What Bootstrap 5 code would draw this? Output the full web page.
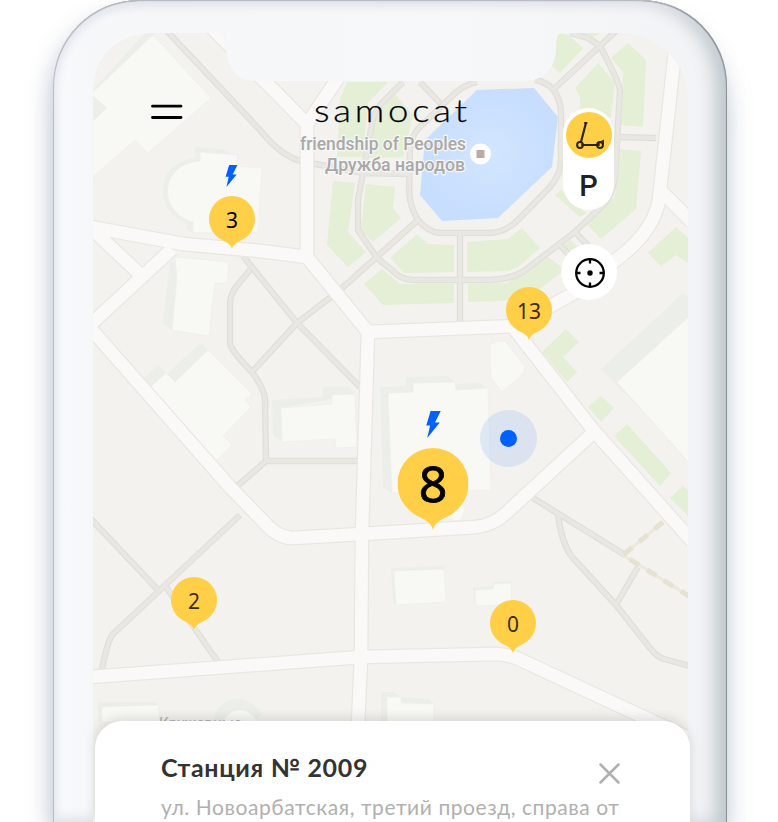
<!DOCTYPE html>
<html lang="ru">
<head>
<meta charset="utf-8">
<meta name="viewport" content="width=device-width, initial-scale=1">
<title>samocat</title>
<link href="https://cdn.jsdelivr.net/npm/bootstrap@5.3.0/dist/css/bootstrap.min.css" rel="stylesheet">
<style>
body{width:778px;height:822px;background:#fff;font-family:Lato,"Noto Sans",sans-serif}
.phone{width:674px;height:822px;margin-left:53px;padding:33px 38px 0 40px;border-radius:86px 86px 0 0;
background:linear-gradient(90deg,#f9fafc,#f6f7f9 6%,#f7f8fa 60%,#f1f3f5);
box-shadow:inset 1px 1px 0 #b9bdc3,inset -1px 1px 1px #858d91,inset 4px 4px 9px #e3e6ee,inset -14px 0 18px -3px #bcc4c9,-5px 12px 24px -3px rgba(120,135,165,.45),6px 30px 30px -10px rgba(120,140,165,.38)}
.screen{width:596px}
.map{width:595px;height:789px;left:0;top:0}
.road{stroke-linejoin:round;fill:none}
.topbar{height:156px;padding:66px 0 0 58px}
.logo{font-size:31px;font-weight:300;letter-spacing:3.2px;color:#000;-webkit-text-stroke:.25px #000;line-height:1;margin-left:131px;margin-top:-4px;transform:scaleX(1.18);transform-origin:0 0}
.switcher{width:51px;height:102px;left:470px;top:75px;border-radius:26px;padding-top:4px}
.mode{width:46px;height:46px;background:#ffcf47}
.park{font:500 29px/1 Roboto,sans-serif;color:#222;padding-top:6px}
.locate{width:56px;height:56px;left:468px;top:211px}
.pin{width:46px;height:53px;transform:translate(-50%,0);font-family:"Noto Sans",sans-serif;font-size:21px;color:#3a2c05;line-height:48px}
.pin svg{left:0;top:0;width:100%;height:100%}
.pin.big{width:71px;height:82px;font-size:50px;line-height:71px;-webkit-text-stroke:.8px #000}
.ink{color:#000}
.p3s{left:139px;top:163px}.p13{left:436px;top:254px}.p8{left:340px;top:415px}.p2s{left:101px;top:544px}.p0s{left:420px;top:567px}
.b1{left:132px;top:132px;width:13px;height:22px}.b2{left:333px;top:378px;width:15px;height:27px}
.here{width:57px;height:57px;left:387px;top:377px;background:rgba(0,97,255,.1)}
.here i{width:17px;height:17px;background:#0061ff}
.sheet{width:595px;height:101px;left:2px;top:688px;border-radius:27px 27px 0 0;padding:32px 70px 0 66px;box-shadow:0 -3px 12px rgba(0,0,0,.12)}
.sheet h1{font-size:25px;font-weight:700;color:#333;line-height:29px;letter-spacing:.65px}
.sheet p{font-size:21px;line-height:28px;color:#b0b0b0;margin-top:9px;letter-spacing:.57px}
.shut{width:21px;height:21px;margin-top:10px}
</style>
<script src="https://cdn.jsdelivr.net/npm/bootstrap@5.3.0/dist/js/bootstrap.bundle.min.js"></script>
</head>
<body class="overflow-hidden">
<main class="phone">
<div class="screen position-relative">
<svg class="map position-absolute" viewBox="93 33 595 789">
<defs>
<clipPath id="glass"><path d="M93 822V92C94 56 116 33 156 33H218C227 33 224 41 226 51C229 70 238 81 256 81H526C543 80 554 70 556 52C557 42 555 33 563 33H622C660 34 686 62 688 98V822Z"/></clipPath>
<radialGradient id="water"><stop offset="0" stop-color="#d3e5ff"/><stop offset="1" stop-color="#c7defe"/></radialGradient>
<g id="streets">
<path d="M86 226L183 244L260 251L307 257L368 332L515 326L576 292L621 256Q659 226 660 190L677 33"/>
<path d="M93 230L146 280M172 249L90 325M90 328L230 487L263 521Q276 537 292 538L362 534L476 527Q493 525 505 514L594 432M512 326L594 431L692 541"/>
<path d="M307 258V120M212 28L307 124L338 78M368 332L366 400L362 530L361 657L358 725M90 677L361 657L495 654Q512 655 523 661L695 741M660 190L692 222"/>
</g>
<g id="paths">
<path d="M166 30L260 130Q280 155 300 161L363 173L409 174M403 82L380 105Q373 113 371 130L358 200V230L377 258L393 271Q400 279 412 280H490Q512 279 524 271L575 232L603 205Q616 193 616 160L620 90Q619 82 600 46L588 38L570 33"/>
<path d="M477 82Q466 84 455 93L417 130Q410 140 410 150L409 190Q410 208 418 220Q428 232 440 233L490 233Q506 232 518 220L549 188Q561 175 561 160V112Q559 84 535 80M420 82L440 103M553 90L616 31M618 137L656 138M575 232L595 253M560 245L569 255"/>
<path d="M418 220L340 290L297 323L252 372M460 235V322M243 256L297 323L360 387M250 270L236 287Q230 295 230 305V343Q231 351 252 372Q265 390 265 400L266 461H357M266 461L235 488M240 515L112 635Q106 646 102 670M90 518L158 590M166 587L218 662"/>
<path d="M533 498L625 555M558 515Q562 545 573 558L616 605L650 648Q657 657 664 659L690 666M638 567L616 605"/>
</g>
</defs>
<g clip-path="url(#glass)">
<rect x="93" y="33" width="595" height="789" fill="#f3f2ee"/>
<g fill="#eceee9">
<path d="M93 90L145 33H156L93 94ZM93 96L107 108L93 121Z"/><path d="M195 147L222 149L233 155L193 166C170 176 164 205 193 222V233L187 230V224C153 209 154 163 195 158Z"/>
<path d="M170 262L163 323L172 330L180 262ZM200 343L208 350L175 382L167 374ZM158 365L166 373L145 392L137 385Z"/>
<path d="M272 400L323 397V387L348 386L356 395L281 408L282 442L273 435ZM380 387L406 386V377L448 376L456 384L480 383L488 389L388 394L392 493L383 487ZM683 293L688 297V317L617 382L692 467V462L601 369Z"/>
<path d="M391 568L444 566V570L394 572L396 605L393 603ZM473 588L493 586V582L511 581V585L475 591V606ZM381 692H394L401 697L430 699L434 705L387 701V722H381ZM98 702H155L160 707L102 708V722H98ZM213 722C217 695 248 690 262 715L250 722Z"/>
</g>
<g fill="#f8f8f4" stroke="#efeeea" stroke-width=".7">
<path d="M153 35L211 98L148 153L135 140L93 177V121L107 108L93 96V92Z"/><path d="M200 152L238 155L237 166L262 168L258 232L193 233V222C158 213 158 164 200 161Z"/>
<path d="M175 257L229 262L227 283H215L209 336L172 330L177 278ZM208 350L252 394L245 400L251 407L223 436L232 445L212 465L145 392L166 373L175 382Z"/>
<path d="M281 408L332 404V395L355 394L357 447L336 448L335 439L282 442ZM388 393L413 392V383L455 382L456 390L488 388L491 490L392 493ZM490 345L498 341H505L525 367L524 373L502 392L491 378ZM692 314L617 382L692 466Z"/>
<path d="M394 571L444 569L446 602L396 605ZM475 590L493 589L494 584L511 583V604L476 606ZM387 697H401V703L434 704V722H387ZM102 707L158 705L160 722H102ZM223 722C230 706 249 706 258 722Z"/><ellipse cx="457" cy="505" rx="8" ry="16"/>
</g>
<g fill="#e4efd5">
<path d="M347 82H388L368 103L363 157H337L340 100ZM393 92L413 115L403 157L370 158L375 120ZM333 181L355 183L348 232L366 252L348 267L327 245ZM366 184L395 187L393 208L401 218L373 242L361 230Z"/>
<path d="M417 234L428 244L454 245V272L404 273L390 258ZM467 242L508 239L522 228L540 248L518 267L508 271L467 272ZM382 269L400 284H454V303L383 305L364 284ZM468 284L507 283L548 257L565 270L525 300L468 302ZM563 247L570 240L578 247L572 257Z"/>
<path d="M598 63L615 83L611 117H580V97L575 88ZM628 43L646 60L643 127L621 125L623 72L611 58ZM557 33L568 35L583 48L560 73L551 65ZM618 149L641 151L636 209L601 239L586 223L615 197ZM561 190L586 213L580 217L555 195ZM676 227L688 238V263L676 255L661 266L648 253ZM580 33H600L592 38Z"/>
<path d="M566 329L579 342L563 357L577 372L567 382L542 352ZM601 396L614 408L601 422L588 407ZM627 424L671 473L660 486L614 436ZM683 486L692 493V520L670 498Z"/>
</g>
<use href="#paths" class="road" stroke="#e0dfda" stroke-width="6.4"/><use href="#paths" class="road" stroke="#e8e7e2" stroke-width="4"/>
<path class="road" d="M663 522L623 555L692 598" stroke="#ebe9dc" stroke-width="3"/><path class="road" d="M663 522L623 555L692 598" stroke="#e5e2d2" stroke-width="5" stroke-dasharray="11 9"/>
<use href="#streets" class="road" stroke="#e9e7e1" stroke-width="15"/><use href="#streets" class="road" stroke="#faf9f7" stroke-width="12.5"/>
<path fill="url(#water)" d="M477 90L534 88L558 117L552 167L498 218L442 221L420 195L425 140Z"/>
<g font-family="Roboto,sans-serif" font-size="19" font-weight="500" fill="#a8a8a8" stroke="#f7f7f5" stroke-width="2.5" paint-order="stroke" text-anchor="end"><text x="466" y="150" textLength="166" lengthAdjust="spacingAndGlyphs">friendship of Peoples</text><text x="465" y="171" textLength="140" lengthAdjust="spacingAndGlyphs">Дружба народов</text></g>
<circle cx="480.500" cy="154" r="10.500" fill="#fff"/><path fill="#bcaaa4" d="M476.500 150h8v8h-8z"/>
<text x="159" y="728.500" font-family="Roboto,sans-serif" font-size="16" fill="#b0b0ba" textLength="83" lengthAdjust="spacingAndGlyphs">Кружевные</text>
</g>
</svg>

<header class="topbar position-relative d-flex align-items-start">
<svg width="32" height="24" viewBox="0 0 32 24" stroke="#000" stroke-width="2.800" stroke-linecap="round"><path d="M1.500 7.200h28.500M1.500 18.500h28.500"/></svg>
<div class="logo">samocat</div>
</header>

<div class="switcher position-absolute bg-white d-flex flex-column align-items-center">
<div class="mode rounded-circle"><svg class="d-block" width="46" height="46" fill="none" stroke="#2d240d" stroke-linecap="round"><path stroke-width="2.200" d="M19 11h1.500M19.800 11.500L15 30"/><path stroke-width="1.800" d="M16 33h17M32 31.500l5-2.500v3"/><circle cx="14" cy="33" r="2.900" stroke-width="2"/><circle cx="34" cy="33" r="2.900" stroke-width="2"/></svg></div>
<div class="park mt-2">P</div>
</div>
<div class="locate position-absolute bg-white rounded-circle d-flex align-items-center justify-content-center"><svg width="32" height="32" fill="none" stroke="#000" stroke-width="2.300"><circle cx="17" cy="17" r="13.800"/><path d="M17 3v4.500M17 26.500v4.500M3 17h4.500M26.500 17h4.500"/><circle cx="17" cy="17" r="2.700" fill="#000" stroke="none"/></svg></div>

<svg class="b1 position-absolute" viewBox="0 0 15 28"><path fill="#0061ff" d="M4.500 0H15L9 12h5L1 28L4 15H0Z"/></svg>
<svg class="b2 position-absolute" viewBox="0 0 15 28"><path fill="#0061ff" d="M4.500 0H15L9 12h5L1 28L4 15H0Z"/></svg>
<div class="pin p3s ink position-absolute text-center"><svg class="position-absolute" viewBox="0 0 46 53"><path fill="#ffcf47" d="M23 53C22 49 19 47 15 45C6 41 0 33 0 23A23 23 0 0 1 46 23C46 33 40 41 31 45C27 47 24 49 23 53Z"/></svg><span class="position-relative">3</span></div>
<div class="pin p13 position-absolute text-center"><svg class="position-absolute" viewBox="0 0 46 53"><path fill="#ffcf47" d="M23 53C22 49 19 47 15 45C6 41 0 33 0 23A23 23 0 0 1 46 23C46 33 40 41 31 45C27 47 24 49 23 53Z"/></svg><span class="position-relative">13</span></div>
<div class="pin big p8 ink position-absolute text-center"><svg class="position-absolute" viewBox="0 0 46 53"><path fill="#ffcf47" d="M23 53C22 49 19 47 15 45C6 41 0 33 0 23A23 23 0 0 1 46 23C46 33 40 41 31 45C27 47 24 49 23 53Z"/></svg><span class="position-relative">8</span></div>
<div class="pin p2s position-absolute text-center"><svg class="position-absolute" viewBox="0 0 46 53"><path fill="#ffcf47" d="M23 53C22 49 19 47 15 45C6 41 0 33 0 23A23 23 0 0 1 46 23C46 33 40 41 31 45C27 47 24 49 23 53Z"/></svg><span class="position-relative">2</span></div>
<div class="pin p0s position-absolute text-center"><svg class="position-absolute" viewBox="0 0 46 53"><path fill="#ffcf47" d="M23 53C22 49 19 47 15 45C6 41 0 33 0 23A23 23 0 0 1 46 23C46 33 40 41 31 45C27 47 24 49 23 53Z"/></svg><span class="position-relative">0</span></div>
<div class="here position-absolute rounded-circle d-flex align-items-center justify-content-center"><i class="rounded-circle"></i></div>

<section class="sheet position-absolute bg-white overflow-hidden">
<div class="d-flex justify-content-between"><h1 class="m-0 text-nowrap">Станция № 2009</h1><svg class="shut" viewBox="0 0 21 21" stroke="#b0b0b0" stroke-width="2.500" stroke-linecap="round"><path d="M1.500 1.500l18 18M19.500 1.500l-18 18"/></svg></div>
<p class="mb-0 text-nowrap">ул. Новоарбатская, третий проезд, справа от</p>
</section>
</div>
</main>
</body>
</html>
